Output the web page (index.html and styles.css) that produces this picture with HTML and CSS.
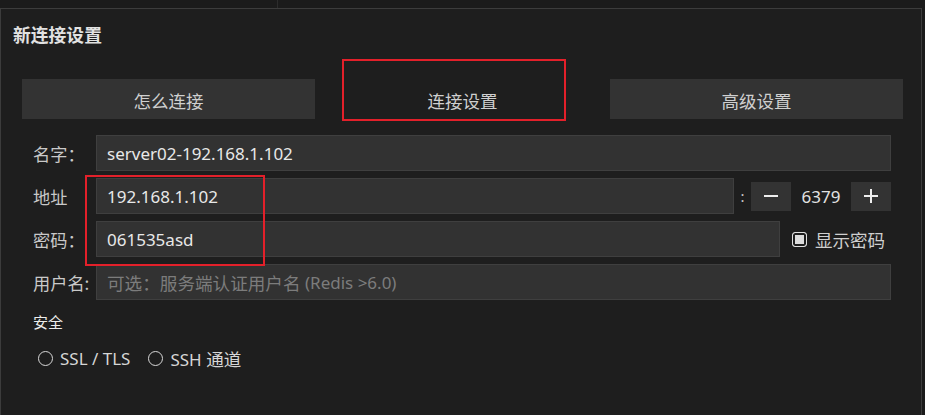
FILE: index.html
```html
<!DOCTYPE html>
<html lang="zh">
<head>
<meta charset="utf-8">
<title>新连接设置</title>
<link rel="stylesheet" href="styles.css">
</head>
<body>
<div class="topbar"><span class="topdiv"></span></div>
<div class="dialog">
  <div class="title">新连接设置</div>
  <div class="tabs">
    <div class="tab">怎么连接</div>
    <div class="tab active">连接设置</div>
    <div class="tab">高级设置</div>
  </div>
  <div class="form">
    <label class="lbl">名字：</label>
    <div class="field"><div class="input">server02-192.168.1.102</div></div>

    <label class="lbl">地址</label>
    <div class="field">
      <div class="input">192.168.1.102</div>
      <span class="colon">:</span>
      <div class="spin">
        <div class="spin-btn"><svg width="14" height="14" viewBox="0 0 14 14"><line x1="0" y1="7" x2="14" y2="7" stroke="#eeeeee" stroke-width="2"/></svg></div>
        <div class="spin-val">6379</div>
        <div class="spin-btn"><svg width="14" height="14" viewBox="0 0 14 14"><line x1="0" y1="7" x2="14" y2="7" stroke="#eeeeee" stroke-width="2"/><line x1="7" y1="0" x2="7" y2="14" stroke="#eeeeee" stroke-width="2"/></svg></div>
      </div>
    </div>

    <label class="lbl">密码：</label>
    <div class="field">
      <div class="input">061535asd</div>
      <div class="check"><span class="box"></span><span>显示密码</span></div>
    </div>

    <label class="lbl">用户名:</label>
    <div class="field"><div class="input placeholder"><span class="cjk">可选：服务端认证用户名</span>&nbsp;(Redis &gt;6.0)</div></div>
  </div>
  <div class="section">安全</div>
  <div class="radios">
    <div class="radio"><span class="circle"></span><span>SSL / TLS</span></div>
    <div class="radio"><span class="circle"></span><span>SSH <span class="cjk">通道</span></span></div>
  </div>
  <div class="mark mark-tab"></div>
  <div class="mark mark-fields"></div>
</div>
</body>
</html>
```
FILE: styles.css
```css
* { box-sizing: border-box; }
html, body { margin: 0; padding: 0; }
body {
  background: #1b1b1b;
  width: 925px;
  height: 415px;
  overflow: hidden;
  font-family: "Noto Sans", "Noto Sans CJK SC", sans-serif;
  color: #d4d4d4;
}
.cjk {
  font-family: "Noto Sans CJK SC", sans-serif;
  font-size: 17.6px;
}
.topbar {
  height: 8px;
  position: relative;
}
.topdiv {
  position: absolute;
  left: 277px;
  top: 0;
  width: 1px;
  height: 8px;
  background: #2c2c2c;
}
.dialog {
  position: relative;
  width: 922px;
  height: 407px;
  background: #1e1e1e;
  border: 1px solid #3c3c3c;
  border-bottom: none;
}
.title {
  padding: 15px 0 0 12px;
  font-size: 17.8px;
  line-height: 20px;
  font-weight: 700;
  color: #e2e2e2;
  font-family: "Noto Sans CJK SC", sans-serif;
}
.tabs {
  margin-top: 35px;
  padding-left: 21px;
  display: grid;
  grid-template-columns: 293px 293px 293px;
  column-gap: 1px;
}
.tab {
  height: 40px;
  background: #333333;
  display: flex;
  align-items: center;
  justify-content: center;
  font-size: 17.5px;
  color: #cfcfcf;
  font-family: "Noto Sans CJK SC", sans-serif;
  padding-top: 2px;
}
.tab.active { background: transparent; }
.form {
  margin-top: 16px;
  padding: 0 30px 0 32px;
  display: grid;
  grid-template-columns: 63px 1fr;
  row-gap: 7px;
}
.lbl {
  display: flex;
  align-items: center;
  font-size: 17.2px;
  color: #c9c9c9;
  font-family: "Noto Sans CJK SC", sans-serif;
}
.field {
  display: flex;
  align-items: center;
  height: 36px;
}
.input {
  flex: 1;
  height: 36px;
  background: #323232;
  border: 1px solid #3f3f3f;
  display: flex;
  align-items: center;
  padding-left: 10px;
  font-size: 17px;
  color: #e8e8e8;
  white-space: nowrap;
}
.input.placeholder { color: #7c7c7c; }
.colon {
  width: 17px;
  text-align: center;
  font-size: 15px;
  color: #c9c9c9;
}
.spin {
  width: 140px;
  height: 29px;
  display: flex;
  background: #333333;
}
.spin-btn {
  width: 40px;
  display: flex;
  align-items: center;
  justify-content: center;
}
.spin-val {
  width: 60px;
  background: #1e1e1e;
  display: flex;
  align-items: center;
  justify-content: center;
  font-size: 17px;
  color: #e2e2e2;
}
.check {
  width: 99px;
  margin-left: 12px;
  display: flex;
  align-items: center;
  gap: 8px;
  font-size: 17.5px;
  color: #cfcfcf;
  font-family: "Noto Sans CJK SC", sans-serif;
}
.box {
  width: 15px;
  height: 15px;
  border: 1.5px solid #e0e0e0;
  border-radius: 3px;
  background: #dcdcdc;
  box-shadow: inset 0 0 0 2px #1e1e1e;
  flex: none;
}
.section {
  margin-top: 12px;
  padding-left: 32px;
  font-size: 15px;
  line-height: 20px;
  color: #ececec;
  font-family: "Noto Sans CJK SC", sans-serif;
}
.radios {
  margin-top: 14px;
  padding-left: 37px;
  display: flex;
  gap: 18px;
}
.radio {
  display: flex;
  align-items: center;
  gap: 7px;
  font-size: 17px;
  color: #d6d6d6;
}
.circle {
  width: 15px;
  height: 15px;
  border: 1.5px solid #d8d8d8;
  border-radius: 50%;
  flex: none;
}
.mark {
  position: absolute;
  border: 2px solid #e3202a;
}
.mark-tab {
  left: 341px;
  top: 50px;
  width: 224px;
  height: 62px;
}
.mark-fields {
  left: 84px;
  top: 166px;
  width: 180px;
  height: 91px;
}
```
